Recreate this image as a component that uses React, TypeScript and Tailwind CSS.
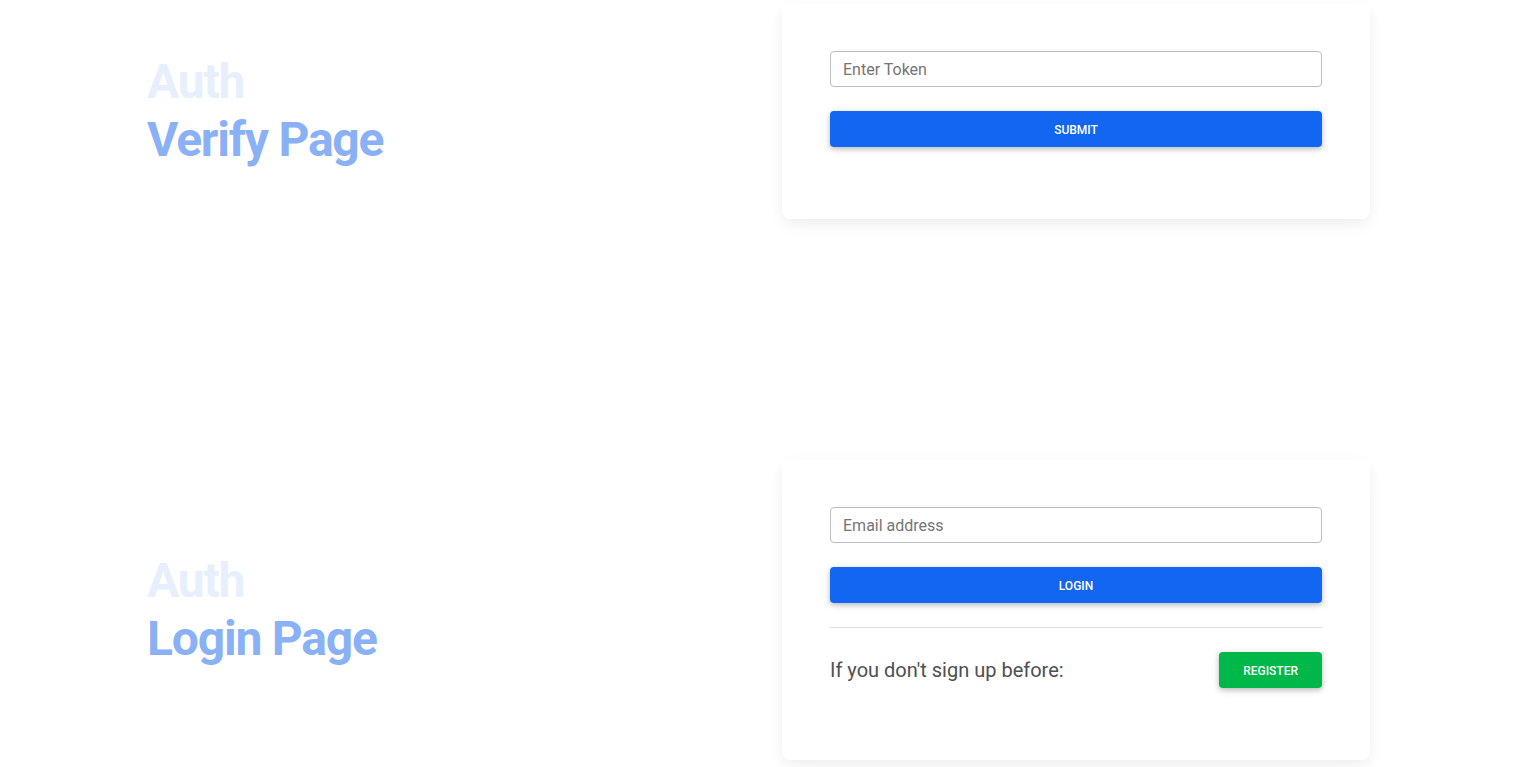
import type { ReactNode } from 'react'

// Một hàng: tiêu đề bên trái + thẻ form bên phải, căn giữa theo chiều dọc
function Section({ title, children, className = '' }: { title: string; children: ReactNode; className?: string }) {
  return (
    <section className={`flex items-center ${className}`}>
      <div className="flex-1 pl-[147px]">
        <h1 className="text-[48px] leading-[1.2] font-bold tracking-[-1.2px]">
          <span className="block text-[#e7effd]">Auth</span>
          <span className="block text-[#8ab1f5]">{title}</span>
        </h1>
      </div>
      <div className="w-[588px] mr-[154px] bg-white rounded-lg shadow-[0_2px_15px_-3px_rgba(0,0,0,0.07),0_10px_20px_-2px_rgba(0,0,0,0.04)] px-12 pt-12 pb-[72px]">
        {children}
      </div>
    </section>
  )
}

function Input({ placeholder }: { placeholder: string }) {
  return (
    <input
      type="text"
      placeholder={placeholder}
      className="block w-full h-9 px-3 text-base text-[#4f4f4f] placeholder:text-[#757575] border border-[#bdbdbd] rounded outline-none"
    />
  )
}

const btnShadow = 'shadow-[0_2px_5px_0_rgba(0,0,0,0.2),0_2px_10px_0_rgba(0,0,0,0.1)]'

export default function App() {
  return (
    <div className="min-h-screen bg-white font-['Roboto','Liberation_Sans',sans-serif]">
      <Section title="Verify Page" className="pt-[3px]">
        <Input placeholder="Enter Token" />
        <button
          className={`mt-6 w-full h-9 pt-px rounded bg-[#1266f1] text-white text-xs font-medium uppercase ${btnShadow}`}
        >
          Submit
        </button>
      </Section>

      <Section title="Login Page" className="mt-[240px]">
        <Input placeholder="Email address" />
        <button
          className={`mt-6 w-full h-9 pt-px rounded bg-[#1266f1] text-white text-xs font-medium uppercase ${btnShadow}`}
        >
          Login
        </button>
        <hr className="mt-6 border-0 h-px bg-[#dcdcdc]" />
        <div className="mt-6 flex items-center justify-between">
          <p className="text-xl text-[#4f4f4f]">If you don't sign up before:</p>
          <button className={`h-9 px-6 pt-px rounded bg-[#00b74a] text-white text-xs font-medium uppercase ${btnShadow}`}>
            Register
          </button>
        </div>
      </Section>
    </div>
  )
}
